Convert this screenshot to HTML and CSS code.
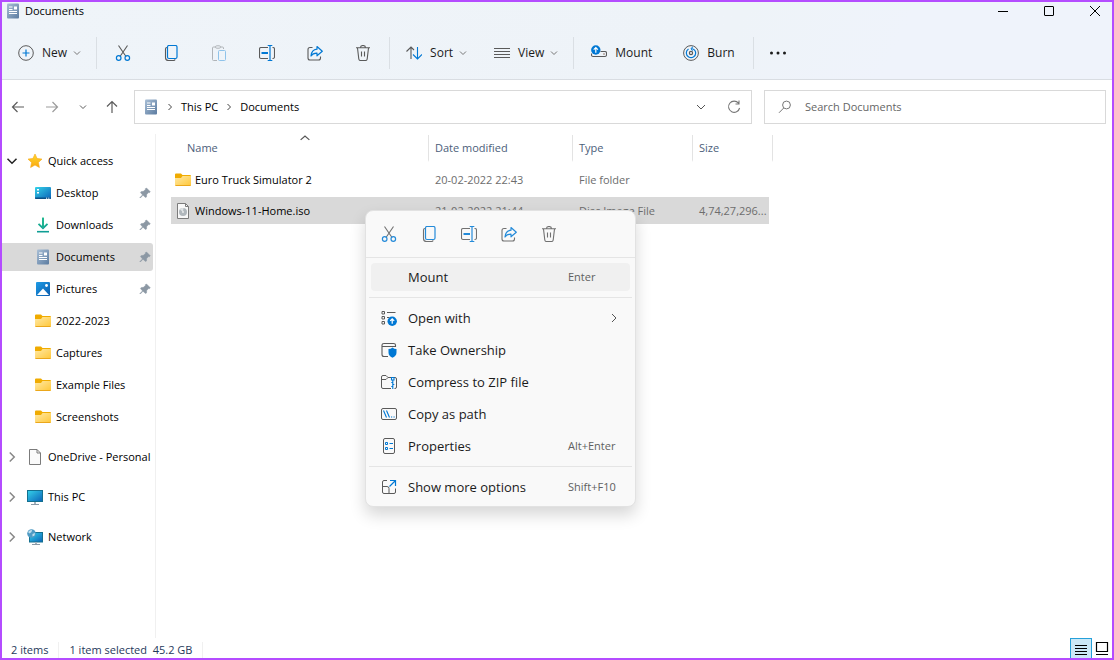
FILE: index.html
```html
<!DOCTYPE html>
<html lang="en">
<head>
  <meta charset="UTF-8" />
  <meta name="viewport" content="width=device-width, initial-scale=1.0"/>
  <title>Documents</title>
  <link rel="stylesheet" href="styles.css">
</head>
<body>
  <!-- Shared icons -->
  <svg class="sprite" aria-hidden="true">
    <defs>
      <linearGradient id="g-doc" x1="0" y1="0" x2="1" y2="1"><stop offset="0" stop-color="#a9bfd6"/><stop offset="1" stop-color="#5b7ba0"/></linearGradient>
      <linearGradient id="g-folder" x1="0" y1="0" x2="1" y2="1"><stop offset="0" stop-color="#ffe9a6"/><stop offset="1" stop-color="#ffc738"/></linearGradient>
      <linearGradient id="g-screen" x1="0" y1="0" x2="1" y2="1"><stop offset="0" stop-color="#35d3ea"/><stop offset="1" stop-color="#0b62b8"/></linearGradient>
      <linearGradient id="g-down" x1="0" y1="0" x2="0" y2="1"><stop offset="0" stop-color="#2cc48e"/><stop offset="1" stop-color="#0f9e94"/></linearGradient>
      <linearGradient id="g-star" x1="0" y1="0" x2="0" y2="1"><stop offset="0" stop-color="#ffd92e"/><stop offset="1" stop-color="#f9a80f"/></linearGradient>
      <linearGradient id="g-pic" x1="0" y1="0" x2="1" y2="1"><stop offset="0" stop-color="#1d9be6"/><stop offset="1" stop-color="#0b5cad"/></linearGradient>
    </defs>

    <symbol id="i-doc" viewBox="0 0 16 16">
      <rect x="2" y="0.5" width="12" height="15" rx="1" fill="url(#g-doc)"/>
      <path d="M4 4h3.5M4 6.500h3.500M4 8.500h8M4 10.500h8" stroke="#fff"/>
      <rect x="9" y="3.500" width="3" height="3" fill="#fff"/>
    </symbol>
    <symbol id="i-folder" viewBox="0 0 16 16">
      <path d="M0 2.500Q0 1.500 1 1.500H6L7.500 3H15Q16 3 16 4V8H0Z" fill="#f0ab00"/>
      <path d="M0 6H6L7.500 4H16V13Q16 14 15 14H1Q0 14 0 13Z" fill="url(#g-folder)"/>
      <path d="M0.500 13.500H15.500" stroke="#eba71b"/>
    </symbol>
    <symbol id="i-star" viewBox="0 0 16 16">
      <path d="M8 1L10.100 5.500L15 6.100L11.400 9.500L12.400 14.500L8 12L3.600 14.500L4.600 9.500L1 6.100L5.900 5.500Z" fill="url(#g-star)" stroke="#f7a614" stroke-width="0.600" stroke-linejoin="round"/>
    </symbol>
    <symbol id="i-desktop" viewBox="0 0 16 16">
      <rect x="0" y="2" width="16" height="12" rx="1" fill="url(#g-screen)"/>
      <path d="M2 4h2v1.500H2zM2 7h2v1.500H2z" fill="#fff"/>
      <path d="M0 12.500H16V13Q16 14 15 14H1Q0 14 0 13Z" fill="#0a4f86"/>
      <path d="M11 13.200h1.200M13.200 13.200h1.200" stroke="#fff"/>
    </symbol>
    <symbol id="i-download" viewBox="0 0 16 16">
      <path d="M8 0.500V11M3.500 6.800L8 11.200L12.500 6.800" fill="none" stroke="url(#g-down)" stroke-width="1.800"/>
      <path d="M8 1V11" stroke="#1fb491" stroke-width="1.800"/>
      <path d="M2 14.700H14" stroke="#0f9e94" stroke-width="1.600"/>
    </symbol>
    <symbol id="i-picture" viewBox="0 0 16 16">
      <rect x="1" y="1" width="14" height="14" rx="1" fill="url(#g-pic)"/>
      <path d="M2 14L8 7.500L14 14Z" fill="#fff"/>
      <circle cx="11.500" cy="4.500" r="1.400" fill="#fff"/>
    </symbol>
    <symbol id="i-file" viewBox="0 0 16 16">
      <path d="M2.500 0.500H10L13.500 4V15.500H2.500Z" fill="#fafafa" stroke="#7b7b7b"/>
      <path d="M10 0.500V4H13.500" fill="none" stroke="#7b7b7b"/>
    </symbol>
    <symbol id="i-iso" viewBox="0 0 16 16">
      <path d="M2.500 0.500H10.500L13.500 3.500V15.500H2.500Z" fill="#f8f8f8" stroke="#7b7b7b"/>
      <path d="M10.500 0.500V3.500H13.500" fill="none" stroke="#7b7b7b"/>
      <circle cx="8" cy="9" r="4" fill="#b0b7bc"/>
      <path d="M8 9L5 6.400A4 4 0 0 1 8.500 5Z" fill="#dfe3e5"/>
      <circle cx="8" cy="9" r="1" fill="#e8eaeb"/>
    </symbol>
    <symbol id="i-pc" viewBox="0 0 16 16">
      <rect x="0.500" y="1.500" width="15" height="11" fill="url(#g-screen)" stroke="#14708f"/>
      <path d="M8 13V15" stroke="#a5b2bd" stroke-width="2"/>
      <path d="M4 15.500H12" stroke="#8a99a6"/>
    </symbol>
    <symbol id="i-network" viewBox="0 0 16 16">
      <rect x="2.500" y="3.500" width="13" height="9.500" fill="url(#g-screen)" stroke="#14708f"/>
      <path d="M9 13V15" stroke="#a5b2bd" stroke-width="2"/>
      <path d="M5 15.500H13" stroke="#8a99a6"/>
      <circle cx="4.500" cy="4.500" r="4.300" fill="#4f9bc4"/>
      <path d="M1 3Q3 0.500 5 1L4.500 3L2.500 4.500ZM5.500 5L8 4L7.500 6.500L5.500 7.500Z" fill="#c2e0ee"/>
    </symbol>
    <symbol id="i-pin" viewBox="0 0 16 16">
      <path d="M9.500 3L13.300 6.800L12.300 7.800L11.500 7.600L9.700 9.500L9.500 12L8.500 12.500L6 10.200L3.300 13L2.900 12.600L5.500 9.900L3.500 7.600L4 6.700L6.400 6.300L8.500 4.400L8.300 3.700Z" fill="#8c98a4" stroke="#8c98a4" stroke-width="0.500"/>
    </symbol>

    <symbol id="i-new" viewBox="0 0 16 16">
      <circle cx="8" cy="8" r="7.300" fill="none" stroke="#5a5a5a"/>
      <path d="M8 4.500V11.500M4.500 8H11.500" stroke="#0078d4" stroke-width="1.200"/>
    </symbol>
    <symbol id="i-cut" viewBox="0 0 16 16">
      <path d="M3.500 0.500L11 11.500M12.500 0.500L5 11.500" fill="none" stroke="#5a5a5a" stroke-width="1.100"/>
      <circle cx="3.700" cy="13" r="2.300" fill="none" stroke="#0078d4" stroke-width="1.200"/>
      <circle cx="12.300" cy="13" r="2.300" fill="none" stroke="#0078d4" stroke-width="1.200"/>
    </symbol>
    <symbol id="i-copy" viewBox="0 0 16 16">
      <path d="M4 2.500Q2.500 2.500 2.500 4V12.500Q2.500 15.500 5.500 15.500H10.500Q12 15.500 12 14.300" fill="none" stroke="#5a5a5a" stroke-width="1.100"/>
      <rect x="4.500" y="0.500" width="9.500" height="13" rx="1.500" fill="none" stroke="#0078d4" stroke-width="1.200"/>
    </symbol>
    <symbol id="i-paste" viewBox="0 0 16 16">
      <path d="M4.500 2H2.500Q1.500 2 1.500 3V14.500Q1.500 15.500 2.500 15.500H6M9.500 2H11.500Q12.500 2 12.500 3V4" fill="none" stroke="#b0b4b8"/>
      <rect x="4.500" y="0.800" width="5" height="2.400" rx="1.200" fill="none" stroke="#b0b4b8"/>
      <rect x="7.500" y="5.500" width="7" height="10" rx="1" fill="none" stroke="#8fc3ea"/>
    </symbol>
    <symbol id="i-rename" viewBox="0 0 16 16">
      <path d="M9 2.500H2Q0.500 2.500 0.500 4V12Q0.500 13.500 2 13.500H9M13.500 2.500H14Q15.500 2.500 15.500 4V12Q15.500 13.500 14 13.500H13.500" fill="none" stroke="#5a5a5a" stroke-width="1.100"/>
      <path d="M11 0.500V15.500M8.700 0.500H13.300M8.700 15.500H13.300" stroke="#0078d4" stroke-width="1.200"/>
      <path d="M2.500 8H9" stroke="#0078d4" stroke-width="2"/>
    </symbol>
    <symbol id="i-share" viewBox="0 0 16 16">
      <path d="M5.500 2.500H3Q1 2.500 1 4.500V13Q1 15 3 15H11.500Q13.500 15 13.500 13V11.500" fill="none" stroke="#5a5a5a" stroke-width="1.100"/>
      <path d="M10 1.500L15.300 6.200L10 10.800V8.200Q6 8 4 11Q4.500 4.800 10 4.200Z" fill="none" stroke="#0078d4" stroke-width="1.200" stroke-linejoin="round"/>
    </symbol>
    <symbol id="i-trash" viewBox="0 0 16 16">
      <path d="M1 2.800H15M5.500 2.800Q5.500 0.500 8 0.500Q10.500 0.500 10.500 2.800M2.500 3L3.800 14Q4 15.500 5.300 15.500H10.700Q12 15.500 12.200 14L13.500 3M6.500 6.500V11.500M9.500 6.500V11.500" fill="none" stroke="#5a5a5a" stroke-width="1.100"/>
    </symbol>
    <symbol id="i-sort" viewBox="0 0 16 16">
      <path d="M5 14V2M0.500 6.500L5 2L8 5" fill="none" stroke="#5a5a5a" stroke-width="1.100"/>
      <path d="M11.500 2V14M7 9.500L11.500 14L16 9.500" fill="none" stroke="#0078d4" stroke-width="1.100"/>
    </symbol>
    <symbol id="i-view" viewBox="0 0 16 16">
      <path d="M0 3.500H16M0 6.500H16M0 9.500H16M0 12.500H16" stroke="#5a5a5a"/>
    </symbol>
    <symbol id="i-mount" viewBox="0 0 16 16">
      <path d="M9.500 6.500H14Q15.500 6.500 15.500 8V10Q15.500 11.500 14 11.500H2Q0.500 11.500 0.500 10V8.500" fill="none" stroke="#5a5a5a" stroke-width="1.100"/>
      <circle cx="13" cy="9" r="0.800" fill="#8a6a5a"/>
      <circle cx="4.800" cy="5" r="4.700" fill="#0078d4"/>
      <path d="M4.800 7.700V2.500M2.700 4.600L4.800 2.500L6.900 4.600" fill="none" stroke="#fff" stroke-width="1.200"/>
    </symbol>
    <symbol id="i-burn" viewBox="0 0 16 16">
      <circle cx="8" cy="8" r="7.400" fill="none" stroke="#5a5a5a"/>
      <circle cx="8" cy="8" r="1.600" fill="none" stroke="#5a5a5a" stroke-width="1.200"/>
      <path d="M5.500 4A4.700 4.700 0 1 0 12.700 8Q12.500 4.500 8.500 3.500" fill="none" stroke="#0078d4" stroke-width="1.200"/>
      <path d="M10 1.800L8 3.500L9.500 5.800" fill="none" stroke="#0078d4"/>
    </symbol>
    <symbol id="i-more" viewBox="0 0 16 16">
      <circle cx="1.500" cy="8" r="1.500" fill="#1b1b1b"/><circle cx="8" cy="8" r="1.500" fill="#1b1b1b"/><circle cx="14.500" cy="8" r="1.500" fill="#1b1b1b"/>
    </symbol>

    <symbol id="i-chevron-down" viewBox="0 0 8 8"><path d="M1 2.500L4 5.500L7 2.500" fill="none" stroke="currentColor"/></symbol>
    <symbol id="i-chevron-right" viewBox="0 0 8 8"><path d="M2.500 1L5.500 4L2.500 7" fill="none" stroke="currentColor"/></symbol>
    <symbol id="i-chevron-thin" viewBox="0 0 12 12"><path d="M2 4L6 8L10 4" fill="none" stroke="currentColor"/></symbol>
    <symbol id="i-submenu" viewBox="0 0 12 12"><path d="M4 2L8 6L4 10" fill="none" stroke="currentColor"/></symbol>
    <symbol id="i-chevron-up" viewBox="0 0 8 8"><path d="M0.500 5.500L4 2.500L7.500 5.500" fill="none" stroke="currentColor"/></symbol>
    <symbol id="i-left" viewBox="0 0 16 16"><path d="M14 8H2.500M7.500 3L2.500 8L7.500 13" fill="none" stroke="currentColor" stroke-width="1.200"/></symbol>
    <symbol id="i-right" viewBox="0 0 16 16"><path d="M2 8H13.500M8.500 3L13.500 8L8.500 13" fill="none" stroke="currentColor" stroke-width="1.200"/></symbol>
    <symbol id="i-up" viewBox="0 0 16 16"><path d="M8 14V2.500M3 7.500L8 2.500L13 7.500" fill="none" stroke="currentColor" stroke-width="1.200"/></symbol>
    <symbol id="i-refresh" viewBox="0 0 16 16">
      <path d="M13.600 9A5.600 5.600 0 1 1 12.500 4.200M13 1.500V5H9.500" fill="none" stroke="#777" stroke-width="1.100"/>
    </symbol>
    <symbol id="i-search" viewBox="0 0 16 16">
      <circle cx="9.500" cy="6" r="3.900" fill="none" stroke="#777"/>
      <path d="M6.700 9L2 13.800" stroke="#777"/>
    </symbol>

    <symbol id="i-open-with" viewBox="0 0 16 16">
      <path d="M1 1.500h2.500v2.500h-2.500zM1 6.500h2.500v2.500h-2.500zM1 11.500h2.500v2.500h-2.500zM6 2.500H14.500M6 7.500H8.500" fill="none" stroke="#5a5a5a"/>
      <circle cx="11.200" cy="11.200" r="4.700" fill="#0078d4"/>
      <path d="M11.200 13.800V8.800M9.200 10.800L11.200 8.800L13.200 10.800" fill="none" stroke="#fff" stroke-width="1.200"/>
    </symbol>
    <symbol id="i-shield" viewBox="0 0 16 16">
      <path d="M7 14.500H3Q1 14.500 1 12.500V3Q1 1.500 3 1.500H12.500Q14.500 1.500 14.500 3V5M1 4.500H14.500" fill="none" stroke="#5a5a5a" stroke-width="1.100"/>
      <path d="M11.500 5.500Q13 7 15.500 7V10.500Q15.500 14 11.500 15.700Q7.500 14 7.500 10.500V7Q10 7 11.500 5.500Z" fill="#0078d4"/>
    </symbol>
    <symbol id="i-zip" viewBox="0 0 16 16">
      <path d="M10 14.500H2Q0.500 14.500 0.500 13V3Q0.500 1.500 2 1.500H5L7 3.500H14Q15.500 3.500 15.500 5V13Q15.500 14.500 14 14.500H13.500M0.500 5.500H5L7 3.500" fill="none" stroke="#5a5a5a"/>
      <path d="M10.500 3.500H13V6H10.500ZM11.800 6V15M10.300 8.500H11.800M11.800 10.500H13.300M10.300 12.500H11.800" fill="none" stroke="#0078d4" stroke-width="1.100"/>
    </symbol>
    <symbol id="i-path" viewBox="0 0 16 16">
      <rect x="0.500" y="2.500" width="15" height="11" rx="1.500" fill="none" stroke="#5a5a5a"/>
      <path d="M2.500 4.500L5.500 11.500M5.500 4.500L8.500 11.500M10 11h1.200M12.500 11h1.200" stroke="#0078d4" stroke-width="1.100"/>
    </symbol>
    <symbol id="i-props" viewBox="0 0 16 16">
      <rect x="2.500" y="0.500" width="11" height="15" rx="1.500" fill="none" stroke="#5a5a5a"/>
      <path d="M4.500 4.500h2v2h-2zM4.500 9.500h2v2h-2zM8.500 5.500H12M8.500 10.500H12" fill="none" stroke="#0078d4"/>
    </symbol>
    <symbol id="i-expand" viewBox="0 0 16 16">
      <path d="M6 1.500H3Q1.500 1.500 1.500 3V13Q1.500 14.500 3 14.500H13Q14.500 14.500 14.500 13V9.500M1.500 7.500H6Q8 7.500 8 9.500V14.500" fill="none" stroke="#5a5a5a"/>
      <path d="M9 1.500H14.500V7M14.500 1.500L8.500 7.500" fill="none" stroke="#0078d4" stroke-width="1.200"/>
    </symbol>
  </svg>

  <div class="window">
    <header class="window-top">
      <div class="titlebar">
        <svg class="icon"><use href="#i-doc"/></svg>
        <h1 class="title">Documents</h1>
        <div class="window-buttons">
          <button aria-label="Minimize"><svg viewBox="0 0 12 12"><path d="M1 6.500H11" stroke="#000"/></svg></button>
          <button aria-label="Maximize"><svg viewBox="0 0 12 12"><rect x="1.500" y="1.500" width="9" height="9" rx="0.500" fill="none" stroke="#000"/></svg></button>
          <button aria-label="Close"><svg viewBox="0 0 12 12"><path d="M1 1L11 11M11 1L1 11" stroke="#000"/></svg></button>
        </div>
      </div>

      <div class="commands">
        <button class="cmd"><svg class="icon"><use href="#i-new"/></svg>New<svg class="chevron"><use href="#i-chevron-down"/></svg></button>
        <span class="divider"></span>
        <button class="cmd-icon" aria-label="Cut"><svg class="icon"><use href="#i-cut"/></svg></button>
        <button class="cmd-icon" aria-label="Copy"><svg class="icon"><use href="#i-copy"/></svg></button>
        <button class="cmd-icon" aria-label="Paste" disabled><svg class="icon"><use href="#i-paste"/></svg></button>
        <button class="cmd-icon" aria-label="Rename"><svg class="icon"><use href="#i-rename"/></svg></button>
        <button class="cmd-icon" aria-label="Share"><svg class="icon"><use href="#i-share"/></svg></button>
        <button class="cmd-icon" aria-label="Delete"><svg class="icon"><use href="#i-trash"/></svg></button>
        <span class="divider"></span>
        <button class="cmd"><svg class="icon"><use href="#i-sort"/></svg>Sort<svg class="chevron"><use href="#i-chevron-down"/></svg></button>
        <button class="cmd"><svg class="icon"><use href="#i-view"/></svg>View<svg class="chevron"><use href="#i-chevron-down"/></svg></button>
        <span class="divider"></span>
        <button class="cmd cmd-wide"><svg class="icon"><use href="#i-mount"/></svg>Mount</button>
        <button class="cmd cmd-wide"><svg class="icon"><use href="#i-burn"/></svg>Burn</button>
        <span class="divider"></span>
        <button class="cmd-more" aria-label="See more"><svg class="icon"><use href="#i-more"/></svg></button>
      </div>
    </header>

    <div class="location">
      <div class="history">
        <button aria-label="Back"><svg class="icon"><use href="#i-left"/></svg></button>
        <button class="forward" aria-label="Forward"><svg class="icon"><use href="#i-right"/></svg></button>
        <button class="recent" aria-label="Recent locations"><svg class="chevron"><use href="#i-chevron-down"/></svg></button>
        <button aria-label="Up"><svg class="icon"><use href="#i-up"/></svg></button>
      </div>
      <div class="address">
        <svg class="icon"><use href="#i-doc"/></svg>
        <svg class="chevron"><use href="#i-chevron-right"/></svg>
        <a href="#">This PC</a>
        <svg class="chevron"><use href="#i-chevron-right"/></svg>
        <a href="#">Documents</a>
        <button class="address-drop" aria-label="Previous locations"><svg class="chevron-lg"><use href="#i-chevron-thin"/></svg></button>
        <button aria-label="Refresh"><svg class="icon"><use href="#i-refresh"/></svg></button>
      </div>
      <label class="search">
        <svg class="icon"><use href="#i-search"/></svg>
        <input type="search" placeholder="Search Documents" aria-label="Search Documents">
      </label>
    </div>

    <div class="body">
      <nav class="tree">
        <div class="tree-group">
          <a class="root open" href="#"><svg class="twisty"><use href="#i-chevron-down"/></svg><svg class="icon"><use href="#i-star"/></svg>Quick access</a>
          <a class="leaf" href="#"><svg class="icon"><use href="#i-desktop"/></svg>Desktop<svg class="icon pin"><use href="#i-pin"/></svg></a>
          <a class="leaf" href="#"><svg class="icon"><use href="#i-download"/></svg>Downloads<svg class="icon pin"><use href="#i-pin"/></svg></a>
          <a class="leaf current" href="#"><svg class="icon"><use href="#i-doc"/></svg>Documents<svg class="icon pin"><use href="#i-pin"/></svg></a>
          <a class="leaf" href="#"><svg class="icon"><use href="#i-picture"/></svg>Pictures<svg class="icon pin"><use href="#i-pin"/></svg></a>
          <a class="leaf" href="#"><svg class="icon"><use href="#i-folder"/></svg>2022-2023</a>
          <a class="leaf" href="#"><svg class="icon"><use href="#i-folder"/></svg>Captures</a>
          <a class="leaf" href="#"><svg class="icon"><use href="#i-folder"/></svg>Example Files</a>
          <a class="leaf" href="#"><svg class="icon"><use href="#i-folder"/></svg>Screenshots</a>
        </div>
        <a class="root" href="#"><svg class="twisty"><use href="#i-chevron-right"/></svg><svg class="icon"><use href="#i-file"/></svg>OneDrive - Personal</a>
        <a class="root" href="#"><svg class="twisty"><use href="#i-chevron-right"/></svg><svg class="icon"><use href="#i-pc"/></svg>This PC</a>
        <a class="root" href="#"><svg class="twisty"><use href="#i-chevron-right"/></svg><svg class="icon"><use href="#i-network"/></svg>Network</a>
      </nav>

      <main class="files">
        <table>
          <colgroup>
            <col class="col-name"><col class="col-date"><col class="col-type"><col class="col-size">
          </colgroup>
          <thead>
            <tr>
              <th>Name<svg class="sort-mark"><use href="#i-chevron-up"/></svg></th>
              <th>Date modified</th>
              <th>Type</th>
              <th>Size</th>
            </tr>
          </thead>
          <tbody>
            <tr>
              <td><span class="file"><svg class="icon"><use href="#i-folder"/></svg>Euro Truck Simulator 2</span></td>
              <td>20-02-2022 22:43</td>
              <td>File folder</td>
              <td></td>
            </tr>
            <tr class="selected">
              <td><span class="file"><svg class="icon"><use href="#i-iso"/></svg>Windows-11-Home.iso</span></td>
              <td>21-02-2022 21:44</td>
              <td>Disc Image File</td>
              <td>4,74,27,296...</td>
            </tr>
          </tbody>
        </table>
      </main>
    </div>

    <footer class="status">
      <span>2 items</span>
      <span>1 item selected&nbsp; 45.2 GB</span>
      <div class="layout-buttons">
        <button class="active" aria-label="Details view"><svg viewBox="0 0 16 16"><path d="M2 4.500H14M2 7.500H14M2 10.500H14M2 13.500H14" stroke="#000"/></svg></button>
        <button aria-label="Large icons view"><svg viewBox="0 0 16 16"><path d="M2.500 2.500H13.500V11.500H2.500ZM2 14.500H14" fill="none" stroke="#000" stroke-width="1.200"/></svg></button>
      </div>
    </footer>

    <div class="menu" role="menu">
      <div class="menu-icons">
        <button aria-label="Cut"><svg class="icon"><use href="#i-cut"/></svg></button>
        <button aria-label="Copy"><svg class="icon"><use href="#i-copy"/></svg></button>
        <button aria-label="Rename"><svg class="icon"><use href="#i-rename"/></svg></button>
        <button aria-label="Share"><svg class="icon"><use href="#i-share"/></svg></button>
        <button aria-label="Delete"><svg class="icon"><use href="#i-trash"/></svg></button>
      </div>
      <div class="menu-list">
        <button class="item hover" role="menuitem"><span></span><span>Mount</span><kbd>Enter</kbd></button>
        <hr>
        <button class="item" role="menuitem"><svg class="icon"><use href="#i-open-with"/></svg><span>Open with</span><svg class="submenu"><use href="#i-submenu"/></svg></button>
        <button class="item" role="menuitem"><svg class="icon"><use href="#i-shield"/></svg><span>Take Ownership</span></button>
        <button class="item" role="menuitem"><svg class="icon"><use href="#i-zip"/></svg><span>Compress to ZIP file</span></button>
        <button class="item" role="menuitem"><svg class="icon"><use href="#i-path"/></svg><span>Copy as path</span></button>
        <button class="item" role="menuitem"><svg class="icon"><use href="#i-props"/></svg><span>Properties</span><kbd>Alt+Enter</kbd></button>
        <hr>
        <button class="item" role="menuitem"><svg class="icon"><use href="#i-expand"/></svg><span>Show more options</span><kbd>Shift+F10</kbd></button>
      </div>
    </div>
  </div>
</body>
</html>
```
FILE: styles.css
```css
* { box-sizing: border-box; }

body {
  margin: 0;
  font-family: 'Segoe UI', 'Open Sans', 'Noto Sans', sans-serif;
  font-size: 11px;
  line-height: 16px;
  color: #000;
}

button {
  display: flex;
  align-items: center;
  justify-content: center;
  margin: 0;
  padding: 0;
  border: 0;
  background: none;
  font: inherit;
  color: inherit;
}

a {
  color: inherit;
  text-decoration: none;
}

.sprite {
  position: absolute;
  width: 0;
  height: 0;
}

.icon {
  flex: none;
  width: 16px;
  height: 16px;
}

.chevron {
  flex: none;
  width: 8px;
  height: 8px;
}

.window {
  position: relative;
  display: flex;
  flex-direction: column;
  min-height: 100vh;
  border: 2px solid #b44cff;
  background: #fff;
}

/* Title bar and commands */
.window-top {
  background: linear-gradient(115deg, #eff4f9 0%, #eef3f8 65%, #eff3fb 80%);
  border-bottom: 1px solid #d9dde2;
}

.titlebar {
  display: flex;
  align-items: center;
  gap: 4px;
  height: 18px;
  padding-left: 3px;
}

.title {
  margin: 0;
  font-size: 11px;
  font-weight: 400;
}

.window-buttons {
  display: flex;
  gap: 12px;
  margin-left: auto;
}

.window-buttons button {
  width: 34px;
  height: 18px;
}

.window-buttons svg {
  width: 12px;
  height: 12px;
}

.commands {
  display: flex;
  padding: 17px 0 10px 2px;
  font-size: 12px;
  color: #1b1b1b;
}

.commands button {
  height: 32px;
}

.cmd {
  gap: 8px;
  padding: 0 13px 0 14px;
}

.cmd .chevron {
  margin-left: -2px;
  color: #777;
}

.cmd-wide {
  padding: 0 16px 0 15px;
}

.cmd-icon {
  width: 48px;
}

.cmd-more {
  width: 44px;
}

.divider {
  width: 1px;
  margin: 0 2px;
  background: #dadfe4;
}

/* Address row */
.location {
  display: grid;
  grid-template-columns: 132px 618fr 354fr;
  padding: 10px 6px 10px 0;
}

.history {
  display: flex;
  align-items: center;
  color: #5c5c5c;
}

.history button {
  width: 32px;
  height: 34px;
}

.history .forward {
  width: 36px;
  color: #9b9b9b;
}

.history .recent {
  width: 26px;
}

.address,
.search {
  display: flex;
  align-items: center;
  height: 34px;
  border: 1px solid #d9d9d9;
}

.address {
  padding: 0 9px 0 8px;
  gap: 7px;
}

.address > .chevron {
  color: #444;
}

.address-drop {
  margin-left: auto;
  margin-right: 12px;
}

.chevron-lg {
  width: 12px;
  height: 12px;
  color: #555;
}

.search {
  gap: 12px;
  margin-left: 12px;
  padding: 0 12px;
}

.search input {
  flex: 1;
  min-width: 0;
  padding: 0;
  border: 0;
  outline: 0;
  background: none;
  font: inherit;
}

.search input::placeholder {
  color: #666;
  opacity: 1;
}

/* Navigation pane */
.body {
  display: flex;
  flex: 1;
}

.tree {
  display: flex;
  flex-direction: column;
  flex: none;
  gap: 12px;
  width: 154px;
  padding: 13px 2px 0 0;
  border-right: 1px solid #f0f0f0;
}

.tree-group {
  display: flex;
  flex-direction: column;
  gap: 4px;
}

.tree a {
  display: flex;
  align-items: center;
  height: 28px;
  white-space: nowrap;
  border-radius: 0 3px 3px 0;
}

.root {
  gap: 5px;
  padding-left: 4px;
}

.twisty {
  flex: none;
  width: 12px;
  height: 12px;
  margin-right: 4px;
  color: #888;
}

.open .twisty {
  color: #222;
}

.leaf {
  gap: 5px;
  padding-left: 33px;
}

.current {
  background: #d9d9d9;
}

.pin {
  margin-left: auto;
}

/* File list */
.files {
  flex: 1;
  padding: 1px 0 0 15px;
}

table {
  table-layout: fixed;
  width: 602px;
  border-spacing: 0;
}

.col-name { width: 258px; }
.col-date { width: 144px; }
.col-type { width: 120px; }
.col-size { width: 80px; }

th {
  position: relative;
  height: 27px;
  padding: 0 6px;
  border-right: 1px solid #e3e3e3;
  border-bottom: 2px solid transparent;
  font-weight: 400;
  text-align: left;
  color: #4c607a;
}

th:first-child {
  padding-left: 16px;
}

.sort-mark {
  position: absolute;
  top: -2px;
  left: 129px;
  width: 10px;
  height: 10px;
  color: #555;
}

td {
  height: 31px;
  padding: 0 6px;
  border-top: 4px solid transparent;
  background-clip: padding-box;
  white-space: nowrap;
  color: #6d6d6d;
}

td:first-child {
  padding-left: 4px;
  color: #000;
}

td:last-child {
  padding-right: 0;
  border-right: 4px solid transparent;
}

.selected td {
  background-color: #d9d9d9;
}

.file {
  display: flex;
  align-items: center;
  gap: 4px;
}

/* Status bar */
.status {
  display: flex;
  align-items: flex-end;
  height: 20px;
  padding-left: 9px;
  color: #1e395b;
}

.status span {
  padding-right: 10px;
  margin-right: 10px;
  border-right: 1px solid #f0f0f0;
}

.layout-buttons {
  display: flex;
  margin-left: auto;
}

.layout-buttons button {
  width: 20px;
  height: 20px;
}

.layout-buttons svg {
  width: 16px;
  height: 16px;
}

.layout-buttons .active {
  width: 22px;
  background: #cce8f6;
  border: 1px solid #26a0da;
  border-bottom: 0;
}

/* Context menu */
.menu {
  position: absolute;
  top: 208px;
  left: 363px;
  width: 271px;
  border: 1px solid #e2e2e2;
  border-radius: 8px;
  background: #f9f9f9;
  box-shadow: 0 8px 16px rgba(0, 0, 0, 0.16);
  color: #1b1b1b;
}

.menu-icons {
  display: flex;
  height: 47px;
  padding-left: 3px;
  border-bottom: 1px solid #e5e5e5;
}

.menu-icons button {
  width: 40px;
}

.menu-icons .icon {
  opacity: 0.85;
}

.menu-list {
  display: flex;
  flex-direction: column;
  gap: 4px;
  padding: 5px;
}

.menu-list hr {
  width: calc(100% + 4px);
  height: 1px;
  margin: 2px -2px;
  border: 0;
  background: #e5e5e5;
}

.item {
  display: grid;
  grid-template-columns: 16px 1fr 62px;
  column-gap: 11px;
  height: 28px;
  padding-left: 10px;
  border-radius: 4px;
  font-size: 13px;
  text-align: left;
  white-space: nowrap;
}

.item.hover {
  background: #f0f0f0;
}

.item kbd {
  font-family: inherit;
  font-size: 11px;
  color: #606060;
}

.submenu {
  justify-self: end;
  width: 12px;
  height: 12px;
  margin-right: 10px;
  color: #555;
}
```
